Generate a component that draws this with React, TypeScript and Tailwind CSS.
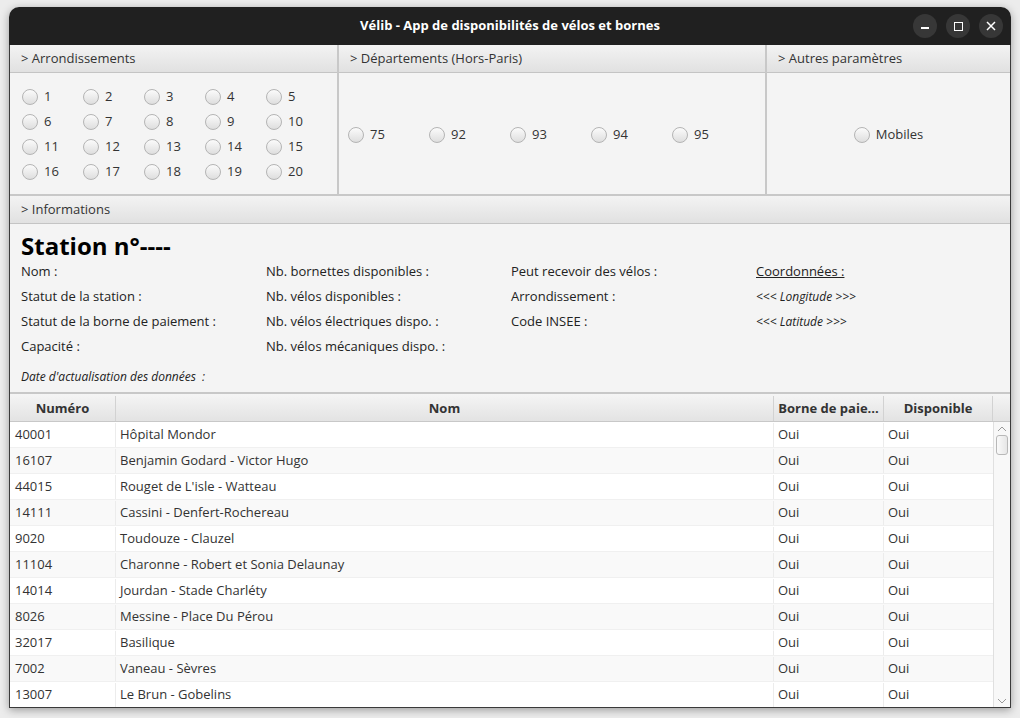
import React from 'react';

const arrondissements = Array.from({ length: 20 }, (_, i) => i + 1);
const departements = ['75', '92', '93', '94', '95'];

const stations = [
  { num: '40001', nom: 'Hôpital Mondor' },
  { num: '16107', nom: 'Benjamin Godard - Victor Hugo' },
  { num: '44015', nom: "Rouget de L'isle - Watteau" },
  { num: '14111', nom: 'Cassini - Denfert-Rochereau' },
  { num: '9020', nom: 'Toudouze - Clauzel' },
  { num: '11104', nom: 'Charonne - Robert et Sonia Delaunay' },
  { num: '14014', nom: 'Jourdan - Stade Charléty' },
  { num: '8026', nom: 'Messine - Place Du Pérou' },
  { num: '32017', nom: 'Basilique' },
  { num: '7002', nom: 'Vaneau - Sèvres' },
  { num: '13007', nom: 'Le Brun - Gobelins' },
];

const Radio: React.FC<{ label: string }> = ({ label }) => (
  <div className="flex items-center gap-[6px] h-[16px]">
    <span className="w-[16px] h-[16px] rounded-full border border-[#b4b4b4] bg-gradient-to-b from-[#fbfbfb] to-[#dedede] shrink-0" />
    <span className="text-[13px] text-[#333]">{label}</span>
  </div>
);

const PaneHeader: React.FC<{ title: string; h?: string }> = ({ title, h = 'h-[28px]' }) => (
  <div className={`${h} flex items-center pl-[11px] text-[13px] text-[#333] bg-gradient-to-b from-[#f3f3f3] to-[#e1e1e1] border-b border-[#c4c4c4] shrink-0`}>
    &gt; {title}
  </div>
);

const App: React.FC = () => {
  return (
    <div
      className="w-[1020px] h-[718px] bg-[#ececec] pl-[9px] pt-[7px] overflow-hidden"
      style={{ fontFamily: '"Open Sans", "Noto Sans", sans-serif' }}
    >
      <div className="w-[1002px] h-[701px] flex flex-col rounded-t-[10px] overflow-hidden shadow-[0_2px_8px_rgba(0,0,0,0.35)] bg-[#f4f4f4]">
        {/* Title bar */}
        <div className="h-[38px] bg-[#202020] flex items-center relative shrink-0">
          <div className="flex-1 text-center text-white font-bold text-[13px]">
            Vélib - App de disponibilités de vélos et bornes
          </div>
          <div className="absolute right-[8px] top-[7px] flex gap-[9px]">
            <div className="w-[24px] h-[24px] rounded-full bg-[#373737] flex items-center justify-center">
              <div className="w-[8px] h-[1.5px] bg-white mt-[4px]" />
            </div>
            <div className="w-[24px] h-[24px] rounded-full bg-[#373737] flex items-center justify-center">
              <div className="w-[9px] h-[9px] border-[1.5px] border-white" />
            </div>
            <div className="w-[24px] h-[24px] rounded-full bg-[#373737] flex items-center justify-center">
              <svg width="10" height="10" viewBox="0 0 10 10">
                <path d="M1 1L9 9M9 1L1 9" stroke="white" strokeWidth="1.5" />
              </svg>
            </div>
          </div>
        </div>

        <div className="flex-1 flex flex-col border-x border-b border-[#3a3a3a] min-h-0">
          {/* Top panes */}
          <div className="flex h-[151px] border-b-2 border-[#c8c8c8] shrink-0">
            <div className="w-[328px] border-r border-[#c8c8c8] flex flex-col">
              <PaneHeader title="Arrondissements" />
              <div className="grid grid-cols-[61px_61px_61px_61px_61px] gap-y-[9px] pl-[12px] pt-[16px]">
                {arrondissements.map((n) => (
                  <Radio key={n} label={String(n)} />
                ))}
              </div>
            </div>
            <div className="w-[428px] border-x border-[#c8c8c8] flex flex-col">
              <PaneHeader title="Départements (Hors-Paris)" />
              <div className="flex-1 flex items-center pl-[9px] pt-[3px]">
                {departements.map((d) => (
                  <div key={d} className="w-[81px]">
                    <Radio label={d} />
                  </div>
                ))}
              </div>
            </div>
            <div className="flex-1 border-l border-[#c8c8c8] flex flex-col">
              <PaneHeader title="Autres paramètres" />
              <div className="flex-1 flex items-center justify-center pt-[3px]">
                <Radio label="Mobiles" />
              </div>
            </div>
          </div>

          {/* Informations */}
          <div className="flex flex-col h-[198px] border-b-2 border-[#c8c8c8] shrink-0">
            <PaneHeader title="Informations" />
            <div className="pl-[11px] pt-[9px] text-[13px] text-[#222]">
              <div className="text-[24px] leading-[26px] font-bold text-black">Station n°----</div>
              <div className="grid grid-cols-[245px_245px_245px_245px] auto-rows-[25px] items-center">
                <div>Nom :</div>
                <div>Nb. bornettes disponibles :</div>
                <div>Peut recevoir des vélos :</div>
                <div className="underline">Coordonnées :</div>
                <div>Statut de la station :</div>
                <div>Nb. vélos disponibles :</div>
                <div>Arrondissement :</div>
                <div className="italic text-[12px]">&lt;&lt;&lt; Longitude &gt;&gt;&gt;</div>
                <div>Statut de la borne de paiement :</div>
                <div>Nb. vélos électriques dispo. :</div>
                <div>Code INSEE :</div>
                <div className="italic text-[12px]">&lt;&lt;&lt; Latitude &gt;&gt;&gt;</div>
                <div>Capacité :</div>
                <div>Nb. vélos mécaniques dispo. :</div>
                <div />
                <div />
              </div>
              <div className="h-[25px] mt-[5px] flex items-center italic text-[12px]">
                Date d'actualisation des données&nbsp; :
              </div>
            </div>
          </div>

          {/* Table */}
          <div className="flex-1 flex flex-col min-h-0 bg-white">
            <div className="h-[28px] pt-[2px] flex bg-gradient-to-b from-[#f5f5f5] to-[#e3e3e3] border-b border-[#c8c8c8] text-[13px] font-bold text-[#333] shrink-0">
              <div className="w-[106px] border-r border-[#d2d2d2] flex items-center justify-center">Numéro</div>
              <div className="w-[658px] border-r border-[#d2d2d2] flex items-center justify-center">Nom</div>
              <div className="w-[110px] border-r border-[#d2d2d2] flex items-center justify-center">Borne de paie...</div>
              <div className="w-[109px] border-r border-[#d2d2d2] flex items-center justify-center">Disponible</div>
              <div className="flex-1" />
            </div>
            <div className="flex-1 flex min-h-0">
              <div className="w-[983px] overflow-hidden">
                {stations.map((s, i) => (
                  <div
                    key={s.num}
                    className={`h-[26px] pt-[1px] flex text-[13px] text-[#333] border-b border-[#f0f0f0] ${i % 2 === 1 ? 'bg-[#f9f9f9]' : 'bg-white'}`}
                  >
                    <div className="w-[106px] border-r border-[#ececec] pl-[5px] flex items-center">{s.num}</div>
                    <div className="w-[658px] border-r border-[#ececec] pl-[4px] flex items-center">{s.nom}</div>
                    <div className="w-[110px] border-r border-[#ececec] pl-[4px] flex items-center">Oui</div>
                    <div className="w-[109px] pl-[4px] flex items-center">Oui</div>
                  </div>
                ))}
              </div>
              {/* Scrollbar */}
              <div className="flex-1 border-l border-[#e0e0e0] bg-[#f8f8f8] flex flex-col items-center">
                <svg width="10" height="8" viewBox="0 0 10 8" className="mt-[3px]">
                  <path d="M1 6L5 2L9 6" fill="none" stroke="#9a9a9a" strokeWidth="1" />
                </svg>
                <div className="w-[12px] h-[20px] mt-[2px] rounded-[3px] border border-[#b8b8b8] bg-gradient-to-r from-[#fafafa] to-[#e6e6e6]" />
                <div className="flex-1" />
                <svg width="10" height="8" viewBox="0 0 10 8" className="mb-[2px]">
                  <path d="M1 2L5 6L9 2" fill="none" stroke="#9a9a9a" strokeWidth="1" />
                </svg>
              </div>
            </div>
          </div>
        </div>
      </div>
    </div>
  );
};

export default App;
